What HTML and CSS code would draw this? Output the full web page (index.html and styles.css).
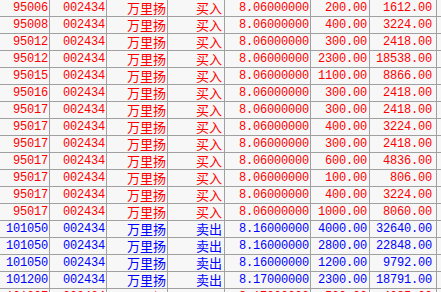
FILE: index.html
```html
<!DOCTYPE html>
<html>
<head>
<meta charset="utf-8">
<link rel="stylesheet" href="styles.css">
</head>
<body>
<div class="grid">
  <div class="row buy"><span>95006</span><span>002434</span><span class="cjk">万里扬</span><span class="cjk">买入</span><span>8.06000000</span><span>200.00</span><span>1612.00</span><span></span></div>
  <div class="row buy"><span>95008</span><span>002434</span><span class="cjk">万里扬</span><span class="cjk">买入</span><span>8.06000000</span><span>400.00</span><span>3224.00</span><span></span></div>
  <div class="row buy"><span>95012</span><span>002434</span><span class="cjk">万里扬</span><span class="cjk">买入</span><span>8.06000000</span><span>300.00</span><span>2418.00</span><span></span></div>
  <div class="row buy"><span>95012</span><span>002434</span><span class="cjk">万里扬</span><span class="cjk">买入</span><span>8.06000000</span><span>2300.00</span><span>18538.00</span><span></span></div>
  <div class="row buy"><span>95015</span><span>002434</span><span class="cjk">万里扬</span><span class="cjk">买入</span><span>8.06000000</span><span>1100.00</span><span>8866.00</span><span></span></div>
  <div class="row buy"><span>95016</span><span>002434</span><span class="cjk">万里扬</span><span class="cjk">买入</span><span>8.06000000</span><span>300.00</span><span>2418.00</span><span></span></div>
  <div class="row buy"><span>95017</span><span>002434</span><span class="cjk">万里扬</span><span class="cjk">买入</span><span>8.06000000</span><span>300.00</span><span>2418.00</span><span></span></div>
  <div class="row buy"><span>95017</span><span>002434</span><span class="cjk">万里扬</span><span class="cjk">买入</span><span>8.06000000</span><span>400.00</span><span>3224.00</span><span></span></div>
  <div class="row buy"><span>95017</span><span>002434</span><span class="cjk">万里扬</span><span class="cjk">买入</span><span>8.06000000</span><span>300.00</span><span>2418.00</span><span></span></div>
  <div class="row buy"><span>95017</span><span>002434</span><span class="cjk">万里扬</span><span class="cjk">买入</span><span>8.06000000</span><span>600.00</span><span>4836.00</span><span></span></div>
  <div class="row buy"><span>95017</span><span>002434</span><span class="cjk">万里扬</span><span class="cjk">买入</span><span>8.06000000</span><span>100.00</span><span>806.00</span><span></span></div>
  <div class="row buy"><span>95017</span><span>002434</span><span class="cjk">万里扬</span><span class="cjk">买入</span><span>8.06000000</span><span>400.00</span><span>3224.00</span><span></span></div>
  <div class="row buy"><span>95017</span><span>002434</span><span class="cjk">万里扬</span><span class="cjk">买入</span><span>8.06000000</span><span>1000.00</span><span>8060.00</span><span></span></div>
  <div class="row sell"><span>101050</span><span>002434</span><span class="cjk">万里扬</span><span class="cjk">卖出</span><span>8.16000000</span><span>4000.00</span><span>32640.00</span><span></span></div>
  <div class="row sell"><span>101050</span><span>002434</span><span class="cjk">万里扬</span><span class="cjk">卖出</span><span>8.16000000</span><span>2800.00</span><span>22848.00</span><span></span></div>
  <div class="row sell"><span>101050</span><span>002434</span><span class="cjk">万里扬</span><span class="cjk">卖出</span><span>8.16000000</span><span>1200.00</span><span>9792.00</span><span></span></div>
  <div class="row sell"><span>101200</span><span>002434</span><span class="cjk">万里扬</span><span class="cjk">卖出</span><span>8.17000000</span><span>2300.00</span><span>18791.00</span><span></span></div>
  <div class="row buy"><span>101207</span><span>002434</span><span class="cjk">万里扬</span><span class="cjk">买入</span><span>8.17000000</span><span>500.00</span><span>4085.00</span><span></span></div>
</div>
</body>
</html>
```

FILE: styles.css
```css
html, body {
  margin: 0;
  padding: 0;
  background: #f7f7f7;
  overflow: hidden;
}

.grid {
  width: 441px;
}

.row {
  display: grid;
  grid-template-columns: 50px 57px 61px 57px 86px 59px 67px 1fr;
  height: 17px;
}

.row > span {
  box-sizing: border-box;
  height: 17px;
  border-right: 1px solid #a0a0a0;
  border-bottom: 1px solid #a0a0a0;
  text-align: right;
  font-family: "Liberation Mono", monospace;
  font-size: 12px;
  letter-spacing: -0.2px;
  line-height: 16px;
  white-space: nowrap;
  overflow: hidden;
  padding-right: 1px;
}

.row > span:nth-child(3) { padding-right: 1px; }
.row > span:nth-child(4) { padding-right: 2px; }
.row > span:nth-child(6) { padding-right: 2px; }
.row > span:nth-child(7) { padding-right: 4px; }
.row > span:last-child { border-right: none; }

.row > span.cjk {
  font-family: "Noto Sans CJK SC", sans-serif;
  font-size: 13px;
  letter-spacing: 0;
}

.buy { color: #ff0000; }
.sell { color: #0000ff; }
```
